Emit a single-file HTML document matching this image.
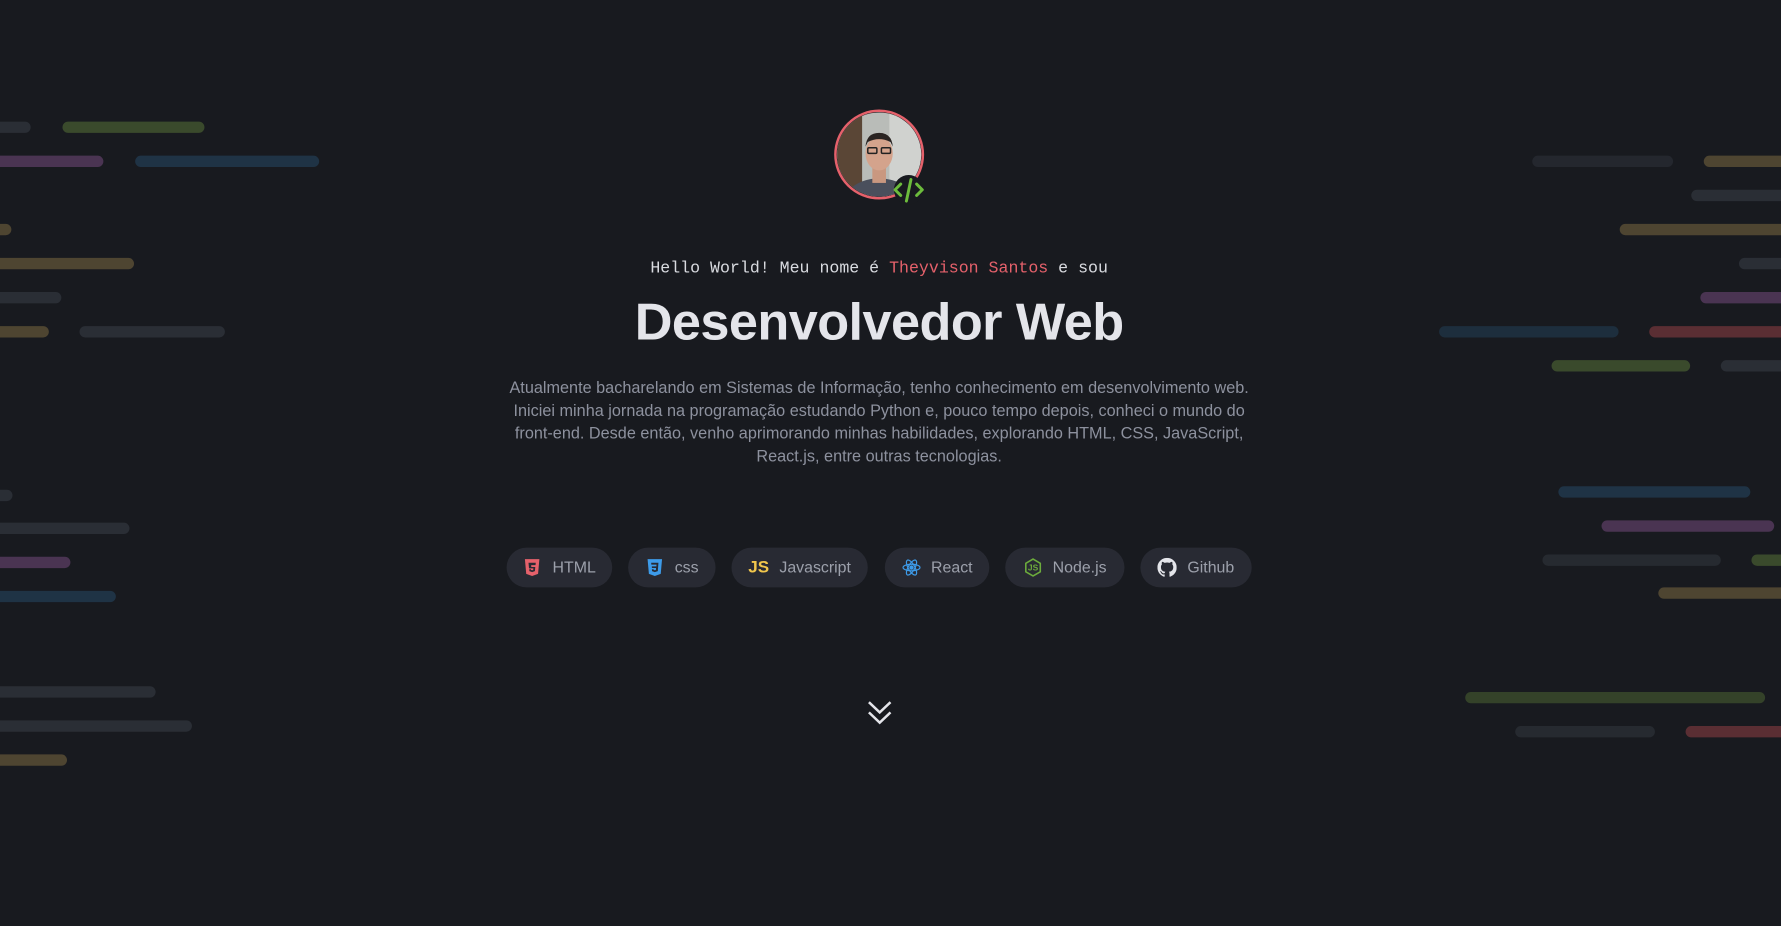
<!DOCTYPE html>
<html><head><meta charset="utf-8"><style>
html,body{margin:0;padding:0;background:#181a1f;overflow:hidden;width:1781px;height:926px}
#w{position:absolute;left:0;top:0;width:1568px;height:815px;transform:scale(1.13584,1.13620);transform-origin:0 0;font-family:"Liberation Sans",sans-serif}
.b{position:absolute;height:10px;border-radius:5px}
.g{background:#2a2e35}.gr{background:#3a4a2c}.p{background:#4a3452}.bl{background:#1f3345}.y{background:#4e4531}.r{background:#5a2e33}
.c{position:absolute;left:0;width:1548px;text-align:center}
.btn{position:absolute;top:482px;height:35px;border-radius:18px;background:#282a33;color:#9ca0ab;font-size:14px;line-height:35px;display:flex;align-items:center;justify-content:center;gap:9px}
.btn svg{width:17px;height:17px}
</style></head><body><div id="w">
<div class="b g" style="left:-5px;width:32px;top:107px"></div><div class="b gr" style="left:55px;width:125px;top:107px"></div>
<div class="b p" style="left:-5px;width:96px;top:137px"></div><div class="b bl" style="left:119px;width:162px;top:137px"></div>
<div class="b y" style="left:-5px;width:15px;top:197px"></div>
<div class="b y" style="left:-5px;width:123px;top:227px"></div>
<div class="b g" style="left:-5px;width:59px;top:257px"></div>
<div class="b y" style="left:-5px;width:48px;top:287px"></div><div class="b g" style="left:70px;width:128px;top:287px"></div>
<div class="b g" style="left:-5px;width:16px;top:431px"></div>
<div class="b g" style="left:-5px;width:119px;top:460px"></div>
<div class="b p" style="left:-5px;width:67px;top:490px"></div>
<div class="b bl" style="left:-5px;width:107px;top:520px"></div>
<div class="b g" style="left:-5px;width:142px;top:604px"></div>
<div class="b g" style="left:-5px;width:174px;top:634px"></div>
<div class="b y" style="left:-5px;width:64px;top:664px"></div>

<div class="b g" style="left:1349px;width:124px;top:137px;opacity:.7"></div><div class="b y" style="left:1500px;width:80px;top:137px"></div>
<div class="b g" style="left:1489px;width:90px;top:167px"></div>
<div class="b y" style="left:1426px;width:150px;top:197px"></div>
<div class="b g" style="left:1531px;width:50px;top:227px"></div>
<div class="b p" style="left:1497px;width:80px;top:257px"></div>
<div class="b bl" style="left:1267px;width:158px;top:287px;opacity:.8"></div><div class="b r" style="left:1452px;width:130px;top:287px"></div>
<div class="b gr" style="left:1366px;width:122px;top:317px"></div><div class="b g" style="left:1515px;width:60px;top:317px"></div>
<div class="b bl" style="left:1372px;width:169px;top:428px"></div>
<div class="b p" style="left:1410px;width:152px;top:458px"></div>
<div class="b g" style="left:1358px;width:157px;top:488px;opacity:.8"></div><div class="b gr" style="left:1542px;width:40px;top:488px"></div>
<div class="b y" style="left:1460px;width:120px;top:517px"></div>
<div class="b gr" style="left:1290px;width:264px;top:609px;opacity:.85"></div>
<div class="b g" style="left:1334px;width:123px;top:639px;opacity:.8"></div><div class="b r" style="left:1484px;width:95px;top:639px"></div>

<svg style="position:absolute;left:733px;top:95px" width="84" height="86" viewBox="0 0 84 86">
<defs><clipPath id="cp"><circle cx="41" cy="41" r="37"/></clipPath></defs>
<g clip-path="url(#cp)">
<rect width="84" height="84" fill="#b9bcb8"/>
<rect x="4" y="0" width="22" height="70" fill="#5a4636"/>
<rect x="50" y="0" width="34" height="84" fill="#d0d2cf"/>
<ellipse cx="41" cy="82" rx="30" ry="20" fill="#4a4f5c"/>
<rect x="35" y="52" width="12" height="14" fill="#c99880"/>
<ellipse cx="41" cy="40" rx="12" ry="15" fill="#d4a38c"/>
<path d="M29 34 Q30 22 41 22 Q52 22 53 34 L51 30 Q41 25 31 30Z" fill="#2a2422"/>
<rect x="31" y="35" width="8" height="5" rx="1" fill="none" stroke="#222" stroke-width="1.3"/>
<rect x="43" y="35" width="8" height="5" rx="1" fill="none" stroke="#222" stroke-width="1.3"/>
</g>
<circle cx="41" cy="41" r="38.5" fill="none" stroke="#e5616b" stroke-width="2.2"/>
<circle cx="67" cy="72" r="13" fill="#181a1f"/>
<path d="M60 67 L55 72 L60 77 M74 67 L79 72 L74 77 M69 63 L65 82" stroke="#6cbc3c" stroke-width="2.6" fill="none" stroke-linecap="round" stroke-linejoin="round"/>
</svg>

<div class="c" style="top:229px;font-family:'Liberation Mono',monospace;font-size:14.6px;color:#d9dbe0">Hello World! Meu nome é <span style="color:#e5616b">Theyvison Santos</span> e sou</div>
<div class="c" style="top:256px;font-size:46px;font-weight:bold;color:#e4e5ea;letter-spacing:-0.5px">Desenvolvedor Web</div>
<div class="c" style="top:332px;font-size:14.3px;line-height:20px;color:#8d919e">Atualmente bacharelando em Sistemas de Informação, tenho conhecimento em desenvolvimento web.<br>Iniciei minha jornada na programação estudando Python e, pouco tempo depois, conheci o mundo do<br>front-end. Desde então, venho aprimorando minhas habilidades, explorando HTML, CSS, JavaScript,<br>React.js, entre outras tecnologias.</div>

<div class="btn" style="left:446px;width:93px"><svg viewBox="0 0 16 16"><path d="M2 1h12l-1.1 12.3L8 15l-4.9-1.7z" fill="#e5616b"/><path d="M5 4h6l-.2 2H7.2l.1 1.6h3.3l-.3 3.4L8 11.8l-2.3-.8-.1-1.6h1.4l.1.6.9.3.9-.3.1-1.3H5.4z" fill="#282a33"/></svg>HTML</div>
<div class="btn" style="left:553px;width:77px"><svg viewBox="0 0 16 16"><path d="M2 1h12l-1.1 12.3L8 15l-4.9-1.7z" fill="#3d9be9"/><path d="M5 4h6l-.5 7-2.5.8-2.3-.8-.1-1.6h1.4l.1.6.9.3.9-.3.1-1.6H5.6l-.1-1.4h3.8l.1-1.4H5.1z" fill="#282a33"/></svg>css</div>
<div class="btn" style="left:644px;width:120px"><span style="color:#f0c64c;font-weight:bold;font-size:15px">JS</span>Javascript</div>
<div class="btn" style="left:779px;width:92px"><svg viewBox="0 0 16 16" fill="none" stroke="#3d9be9" stroke-width="1"><ellipse cx="8" cy="8" rx="7" ry="2.7"/><ellipse cx="8" cy="8" rx="7" ry="2.7" transform="rotate(60 8 8)"/><ellipse cx="8" cy="8" rx="7" ry="2.7" transform="rotate(120 8 8)"/><circle cx="8" cy="8" r="1.3" fill="#3d9be9"/></svg>React</div>
<div class="btn" style="left:885px;width:105px"><svg viewBox="0 0 16 16"><path d="M8 1l6 3.5v7L8 15l-6-3.5v-7z" fill="none" stroke="#6cab3c" stroke-width="1.3"/><text x="8" y="10.5" font-size="7" font-weight="bold" fill="#6cab3c" text-anchor="middle" font-family="Liberation Sans">JS</text></svg>Node.js</div>
<div class="btn" style="left:1004px;width:98px"><svg viewBox="0 0 16 16"><path fill="#e4e5ea" d="M8 0C3.58 0 0 3.58 0 8c0 3.54 2.290 6.53 5.47 7.59.4.07.55-.17.55-.38 0-.19-.01-.82-.01-1.49-2.01.37-2.530-.49-2.690-.94-.09-.23-.48-.94-.82-1.13-.28-.15-.68-.52-.01-.53.63-.01 1.08.58 1.23.82.72 1.21 1.870.87 2.330.66.07-.52.28-.87.51-1.07-1.78-.2-3.64-.89-3.64-3.95 0-.87.31-1.59.82-2.15-.08-.2-.36-1.02.08-2.12 0 0 .67-.21 2.2.82.64-.18 1.32-.27 2-.27.68 0 1.36.09 2 .27 1.53-1.04 2.2-.82 2.2-.82.44 1.1.16 1.92.08 2.12.51.56.82 1.27.82 2.15 0 3.07-1.87 3.75-3.65 3.95.29.25.54.73.54 1.48 0 1.07-.01 1.93-.01 2.2 0 .21.15.46.55.38A8.013 8.013 0 0016 8c0-4.42-3.58-8-8-8z"/></svg>Github</div>

<svg style="position:absolute;left:763px;top:616px" width="23" height="24" viewBox="0 0 23 24"><path d="M2 2l9.5 9 9.5-9M2 11l9.5 9 9.5-9" fill="none" stroke="#e4e5ea" stroke-width="2.2"/></svg>
</div></body></html>
